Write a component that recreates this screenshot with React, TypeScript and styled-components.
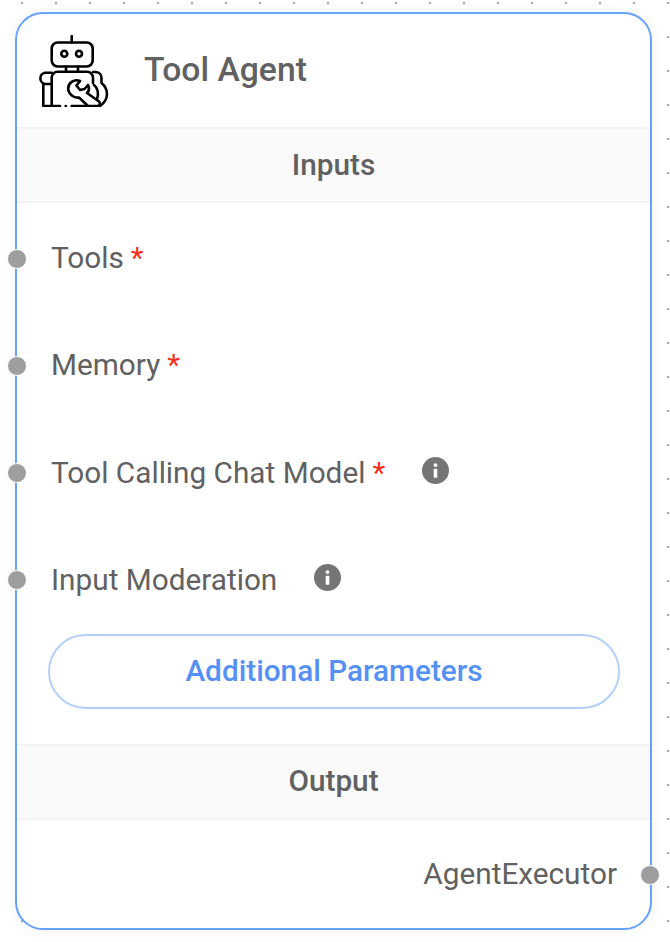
import styled, { createGlobalStyle } from 'styled-components';

const GlobalStyle = createGlobalStyle`
  html, body {
    margin: 0;
    padding: 0;
    background-color: #fff;
  }
  body {
    font-family: Roboto, "Liberation Sans", sans-serif;
    overflow: hidden;
  }
`;

const Canvas = styled.div`
  width: 670px;
  height: 942px;
  box-sizing: border-box;
  padding: 12px 18px 12px 15px;
  background-color: #fff;
  background-image: radial-gradient(circle, #a8a8a8 1.3px, transparent 1.6px);
  background-size: 34px 34px;
  background-position: 5px -14px;
`;

const Card = styled.div`
  position: relative;
  width: 637px;
  height: 918px;
  box-sizing: border-box;
  background: #fff;
  border: 2px solid #66a2fa;
  border-radius: 28px;
  box-shadow: 0 0 16px rgba(32, 40, 45, 0.05);
  display: flex;
  flex-direction: column;
`;

const Header = styled.div`
  height: 113px;
  flex-shrink: 0;
  display: flex;
  align-items: center;
  padding-left: 21px;
  gap: 34px;
`;

const Title = styled.h1`
  margin: -2px 0 0;
  font-size: 33.7px;
  font-weight: 500;
  color: #616161;
`;

const SectionBand = styled.div<{ $tail: number }>`
  height: 76px;
  flex-shrink: 0;
  box-sizing: border-box;
  padding-bottom: ${(p) => p.$tail}px;
  display: flex;
  align-items: center;
  justify-content: center;
  background: #fafafa;
  border-top: 2px solid #f3f3f3;
  border-bottom: 2px solid #f3f3f3;
  font-size: 29.75px;
  font-weight: 500;
  color: #616161;
`;

const InputList = styled.div`
  display: flex;
  flex-direction: column;
  margin-top: 1px;
`;

const InputRow = styled.div`
  position: relative;
  height: 107.25px;
  flex-shrink: 0;
  box-sizing: border-box;
  padding-left: 34px;
  display: flex;
  align-items: center;
  font-size: 29.75px;
  color: #616161;
`;

const Required = styled.span`
  color: #f4301c;
  margin-left: 7px;
`;

const Info = styled.svg`
  width: 27px;
  height: 27px;
  margin-left: 37px;
  margin-top: -3px;
`;

const Port = styled.span<{ $side: 'left' | 'right' }>`
  position: absolute;
  top: 50%;
  ${(p) => (p.$side === 'left' ? 'left: -10px;' : 'right: -10px;')}
  width: 18px;
  height: 18px;
  margin-top: -9px;
  border-radius: 50%;
  background: #9e9e9e;
  border: 1px solid #fff;
`;

const ButtonWrap = styled.div`
  padding: 1px 30px 0 31px;
  margin-bottom: 35px;
`;

const ParamsButton = styled.button`
  width: 100%;
  height: 75px;
  padding: 0 0 2px;
  background: #fff;
  border: 2px solid #b2d0fb;
  border-radius: 38px;
  color: #5591f5;
  font-family: inherit;
  font-size: 29.75px;
  font-weight: 500;
`;

const OutputRow = styled.div`
  position: relative;
  flex: 1;
  display: flex;
  align-items: center;
  justify-content: flex-end;
  padding-right: 33px;
  padding-bottom: 2px;
  font-size: 29.75px;
  color: #616161;
`;

function RobotIcon() {
  return (
    <svg width="72" height="72" viewBox="0 0 72 72" fill="none" stroke="#000" strokeWidth="2.6" strokeLinejoin="round" strokeLinecap="round">
      <path d="M33.7 1v6.5" />
      <rect x="13.7" y="7.5" width="41" height="24" rx="6" />
      <circle cx="26.3" cy="18.7" r="3" />
      <circle cx="41" cy="18.7" r="3" />
      <path d="M28 31.5v5.2M40 31.5v5.2" />
      <path d="M22 71H13.7V43a6 6 0 0 1 6-6.3H49a6 6 0 0 1 6 6.3v5" />
      <path d="M13.7 49H8a5.700 5.700 0 0 1-1-11.300h6.700" />
      <path d="M5.300 49v22h8.400" />
      <path d="M55 37h3a6 6 0 0 1 5.500 6v5c7.500 6 7.500 17-1.500 23" />
      <path d="M56 50c4 3 5 9 3 14" />
      <path d="M27.700 71h.1" />
      <path d="M33.700 71H62" />
      <path fill="#fff" d="M42 46 38.500 50.500 42 55l4.500-1L50 50c1.500 3 1 6-1 8l12 8.500c1.500 1.500 1 4-1 4.500H50l-9-8.500c-5 1-10.500-3.500-10.800-8.500C29.800 48 36 43.500 42 46Z" />
    </svg>
  );
}

function InfoIcon() {
  return (
    <Info viewBox="0 0 24 24">
      <circle cx="12" cy="12" r="12" fill="#757575" />
      <circle cx="12" cy="7.2" r="1.7" fill="#fff" />
      <rect x="10.4" y="10.4" width="3.2" height="8" rx="0.6" fill="#fff" />
    </Info>
  );
}

const inputs = [
  { label: 'Tools', required: true, info: false },
  { label: 'Memory', required: true, info: false },
  { label: 'Tool Calling Chat Model', required: true, info: true },
  { label: 'Input Moderation', required: false, info: true },
];

export default function App() {
  return (
    <>
      <GlobalStyle />
      <Canvas>
        <Card>
          <Header>
            <RobotIcon />
            <Title>Tool Agent</Title>
          </Header>
          <SectionBand $tail={1}>Inputs</SectionBand>
          <InputList>
            {inputs.map((input) => (
              <InputRow key={input.label}>
                <Port $side="left" />
                {input.label}
                {input.required && <Required>*</Required>}
                {input.info && <InfoIcon />}
              </InputRow>
            ))}
          </InputList>
          <ButtonWrap>
            <ParamsButton>Additional Parameters</ParamsButton>
          </ButtonWrap>
          <SectionBand $tail={3}>Output</SectionBand>
          <OutputRow>
            AgentExecutor
            <Port $side="right" />
          </OutputRow>
        </Card>
      </Canvas>
    </>
  );
}
